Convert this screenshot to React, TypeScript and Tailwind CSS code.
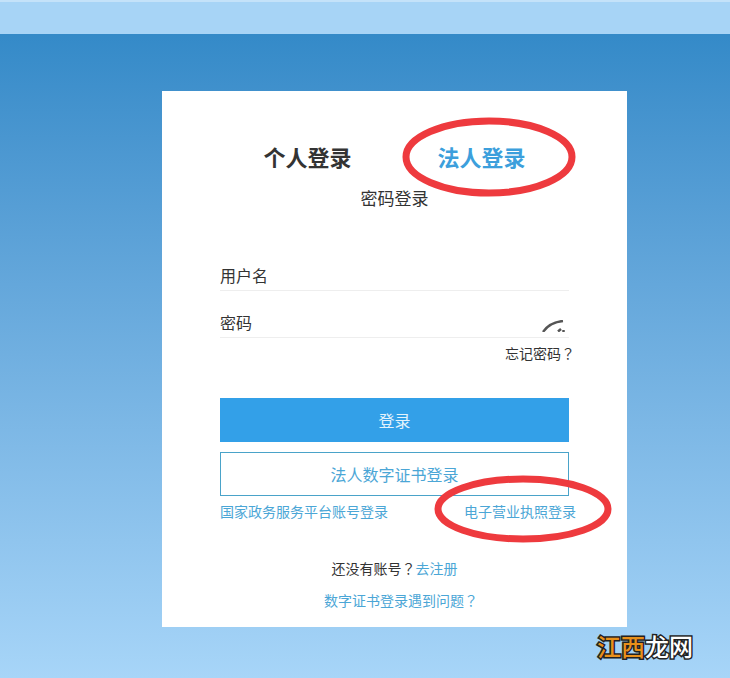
const cjk = "font-['Noto_Sans_CJK_SC','Liberation_Sans',sans-serif]";
const mark = "font-['Noto_Sans_CJK_TC',sans-serif]";

export default function App() {
  return (
    <div className={`relative h-[678px] w-[730px] overflow-hidden bg-[#a7d4f7] ${cjk}`}>
      {/* top strip */}
      <div className="h-[34px] border-t-2 border-[#c4e2f9] bg-[#a7d4f6]" />

      {/* page body */}
      <div className="h-[644px] bg-gradient-to-b from-[#348ac8] to-[#a7d5f8] pl-[162px] pt-[57px]">
        <div className="h-[536px] w-[465px] bg-white px-[58px]">
          <div className="flex justify-center gap-[86px] pt-[48px] text-[22px] leading-[34px] font-bold">
            <span className="text-[#333333]">个人登录</span>
            <span className="text-[#3c9fdc]">法人登录</span>
          </div>
          <div className="mt-[13px] text-center text-[17px] leading-[24px] text-[#333333]">密码登录</div>

          <div className="mt-[48px] h-[33px] border-b border-[#eeeeee] text-[16px] leading-[34px] text-[#333333]">
            用户名
          </div>
          <div className="relative mt-[14px] h-[33px] border-b border-[#eeeeee] text-[16px] leading-[34px] text-[#333333]">
            密码
            <svg className="absolute right-[3px] top-[15px]" width="24" height="12" viewBox="0 0 24 12" fill="none">
              <path d="M1 12C5 6 11 2 21 1" stroke="#555555" strokeWidth="2.5" />
              <path d="M16 11.5L19 9" stroke="#555555" strokeWidth="2.5" />
              <path d="M21.5 12V10" stroke="#555555" strokeWidth="2.5" />
            </svg>
          </div>
          <div className="-mr-[6px] mt-[4px] text-right text-[14px] leading-[22px] text-[#333333]">
            忘记密码<span className={mark}>？</span>
          </div>

          <button className="mt-[34px] block h-[44px] w-full bg-[#33a0e8] text-[16px] text-[#e4f3fc]">登录</button>
          <button className="mt-[10px] block h-[44px] w-full border border-[#4aa3c9] bg-white text-[16px] text-[#4ba6d6]">
            法人数字证书登录
          </button>
          <div className="mt-[5px] flex justify-between text-[14px] leading-[21px] text-[#4ba6d6]">
            <span>国家政务服务平台账号登录</span>
            <span className="-mr-[7px]">电子营业执照登录</span>
          </div>

          <div className="mt-[35px] text-center text-[14px] leading-[22px] text-[#333333]">
            还没有账号<span className={mark}>？</span>
            <span className="text-[#4ba6d6]">去注册</span>
          </div>
          <div className="mt-[10px] pl-[13px] text-center text-[14px] leading-[22px] text-[#4ba6d6]">
            数字证书登录遇到问题<span className={mark}>？</span>
          </div>
        </div>
      </div>

      {/* red hand-drawn circles */}
      <svg className="absolute left-[400px] top-[115px]" width="180" height="84" viewBox="0 0 180 84" fill="none">
        <ellipse cx="89" cy="42" rx="83" ry="36" stroke="#ee3a3e" strokeWidth="7" />
      </svg>
      <svg className="absolute left-[430px] top-[472px]" width="186" height="74" viewBox="0 0 186 74" fill="none">
        <ellipse cx="93" cy="37" rx="85" ry="30" stroke="#ee3a3e" strokeWidth="7" />
      </svg>

      {/* watermark */}
      <div className="absolute left-[597px] top-[629px] text-[24px] font-medium leading-[34px] [-webkit-text-stroke:3px_#222222] [paint-order:stroke_fill]">
        <span className="text-[#e8901a]">江西</span>
        <span className="text-white">龙网</span>
      </div>
    </div>
  );
}
